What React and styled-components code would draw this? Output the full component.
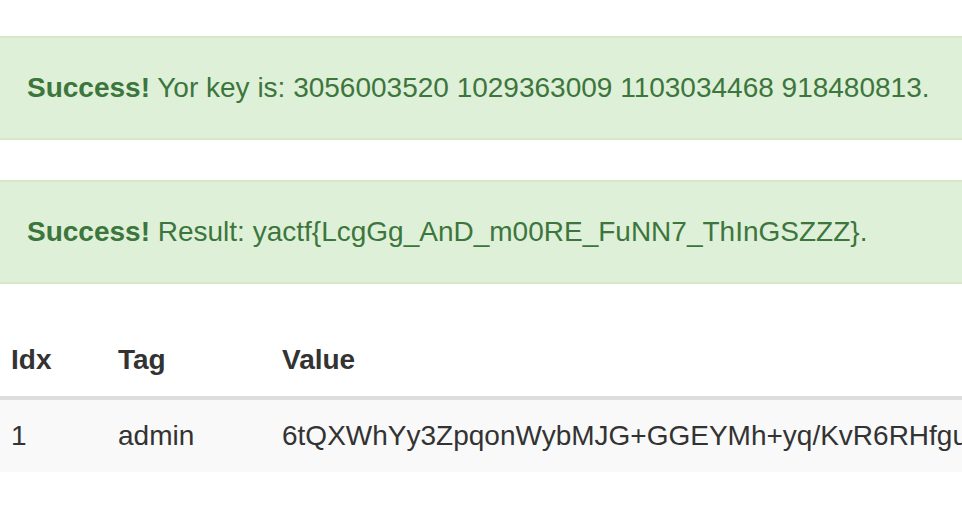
import React from "react";
import styled, { createGlobalStyle } from "styled-components";

const GlobalStyle = createGlobalStyle`
  html, body {
    margin: 0;
    padding: 0;
    overflow: hidden;
    background: #fff;
  }
  body {
    font-family: "Liberation Sans", Arial, sans-serif;
    font-size: 28px;
    line-height: 40px;
    color: #333;
  }
`;

const rows = [
  {
    idx: 1,
    tag: "admin",
    value: "6tQXWhYy3ZpqonWybMJG+GGEYMh+yq/KvR6RHfguZ3k1oB8sQw==",
  },
];

const App = () => {
  return (
    <>
      <GlobalStyle />
      <Page>
        <Alert>
          <strong>Success!</strong> Yor key is: 3056003520 1029363009 1103034468 918480813.
        </Alert>
        <Alert>
          <strong>Success!</strong> Result: yactf{"{"}LcgGg_AnD_m00RE_FuNN7_ThInGSZZZ{"}"}.
        </Alert>
        <Table>
          <thead>
            <tr>
              <Th width={107}>Idx</Th>
              <Th width={164}>Tag</Th>
              <Th>Value</Th>
            </tr>
          </thead>
          <tbody>
            {rows.map((row, i) => (
              <Row key={row.idx} striped={i % 2 === 0}>
                <Td>{row.idx}</Td>
                <Td>{row.tag}</Td>
                <Td>{row.value}</Td>
              </Row>
            ))}
          </tbody>
        </Table>
      </Page>
    </>
  );
};

const Page = styled.div`
  width: 1300px;
  margin-left: -5px;
  padding-top: 36px;
`;

const Alert = styled.div`
  padding: 30px;
  margin-bottom: 40px;
  border: 2px solid #d6e9c6;
  background-color: #dff0d8;
  color: #3c763d;
  white-space: nowrap;

  > strong {
    font-weight: 700;
  }
`;

const Table = styled.table`
  width: 100%;
  border-collapse: collapse;
  border-spacing: 0;
`;

const Th = styled.th`
  width: ${(props) => (props.width ? `${props.width}px` : "auto")};
  padding: 16px;
  text-align: left;
  font-weight: 700;
  line-height: 40px;
  border-bottom: 4px solid #ddd;
  box-sizing: border-box;
`;

const Row = styled.tr`
  background-color: ${(props) => (props.striped ? "#f9f9f9" : "transparent")};
`;

const Td = styled.td`
  padding: 16px;
  line-height: 40px;
  white-space: nowrap;
  vertical-align: top;
`;

export default App;
